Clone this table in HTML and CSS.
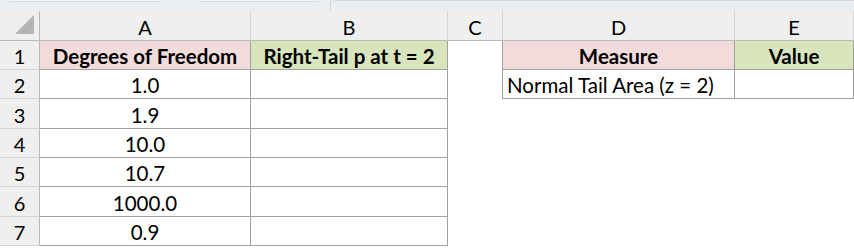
FILE: index.html
```html
<!DOCTYPE html>
<html>
<head>
<meta charset="utf-8">
<link rel="stylesheet" href="styles.css">
</head>
<body>
<div class="strip">
  <div class="tab t1"></div>
  <div class="tab t2"></div>
  <div class="sep"></div>
  <div class="tab t3"></div>
</div>
<div class="sheet">
  <div class="corner"><svg width="20" height="20" viewBox="0 0 20 20"><polygon points="19,0 19,19 0,19" fill="#b4b4b4"/></svg></div>
  <div class="ch">A</div>
  <div class="ch">B</div>
  <div class="ch">C</div>
  <div class="ch">D</div>
  <div class="ch last">E</div>

  <div class="rh">1</div>
  <div class="c b bold pink">Degrees of Freedom</div>
  <div class="c b bold green">Right-Tail p at t = 2</div>
  <div class="c cr"></div>
  <div class="c b bold pink">Measure</div>
  <div class="c b bold green">Value</div>

  <div class="rh">2</div>
  <div class="c b">1.0</div>
  <div class="c b"></div>
  <div class="c cr"></div>
  <div class="c b left">Normal Tail Area (z = 2)</div>
  <div class="c b"></div>

  <div class="rh">3</div>
  <div class="c b">1.9</div>
  <div class="c b"></div>
  <div class="c"></div><div class="c"></div><div class="c"></div>

  <div class="rh">4</div>
  <div class="c b">10.0</div>
  <div class="c b"></div>
  <div class="c"></div><div class="c"></div><div class="c"></div>

  <div class="rh">5</div>
  <div class="c b">10.7</div>
  <div class="c b"></div>
  <div class="c"></div><div class="c"></div><div class="c"></div>

  <div class="rh">6</div>
  <div class="c b">1000.0</div>
  <div class="c b"></div>
  <div class="c"></div><div class="c"></div><div class="c"></div>

  <div class="rh">7</div>
  <div class="c b">0.9</div>
  <div class="c b"></div>
  <div class="c"></div><div class="c"></div><div class="c"></div>
</div>
</body>
</html>
```
FILE: styles.css
```css
* { box-sizing: border-box; }
html, body { margin: 0; padding: 0; background: #ffffff; }
body { font-family: Lato, "Open Sans", sans-serif; color: #000; overflow: hidden; }

.strip {
  height: 11px;
  background: #e9eef2;
  display: flex;
  align-items: flex-start;
}
.tab { height: 2px; border-bottom: 1px solid #d6d9dc; background: #eef1f4; }
.t1 { margin-left: 9px; width: 151px; }
.t2 { margin-left: 40px; width: 118px; }
.sep { margin-left: 12px; width: 1px; height: 11px; background: #d3d6d9; }
.t3 { margin-left: 3px; flex: 1; height: 1px; border-bottom: 0; border-top: 1px solid #d6d9dc; background: transparent; }

.sheet {
  display: grid;
  grid-template-columns: 40px 211px 197px 55px 232px 119px;
  grid-template-rows: 30px 29px 29px 30px 29px 29px 30px 29px;
}

.corner {
  background: #efefef;
  border-right: 1px solid #b9b9b9;
  border-bottom: 1px solid #b9b9b9;
  display: flex;
  align-items: flex-end;
  justify-content: flex-end;
  padding: 0 4px 5px 0;
}
.ch {
  background: #efefef;
  border-right: 1px solid #d4d4d4;
  border-bottom: 1px solid #b9b9b9;
  font-size: 20px;
  display: flex;
  align-items: center;
  justify-content: center;
  padding-top: 2px;
}
.rh {
  background: #efefef;
  border-right: 1px solid #b9b9b9;
  border-bottom: 1px solid #d4d4d4;
  font-size: 20px;
  display: flex;
  align-items: center;
  justify-content: center;
  padding-top: 2px;
}
.c {
  font-size: 20.5px;
  display: flex;
  align-items: center;
  justify-content: center;
  padding-top: 2px;
  white-space: nowrap;
}
.b {
  border-right: 1px solid #a0a0a0;
  border-bottom: 1px solid #a0a0a0;
}
.cr { border-right: 1px solid #a0a0a0; }
.bold { font-weight: 700; }
.pink { background: #f2dcdb; }
.green { background: #d8e4bc; }
.left { justify-content: flex-start; padding-left: 4px; }
```
